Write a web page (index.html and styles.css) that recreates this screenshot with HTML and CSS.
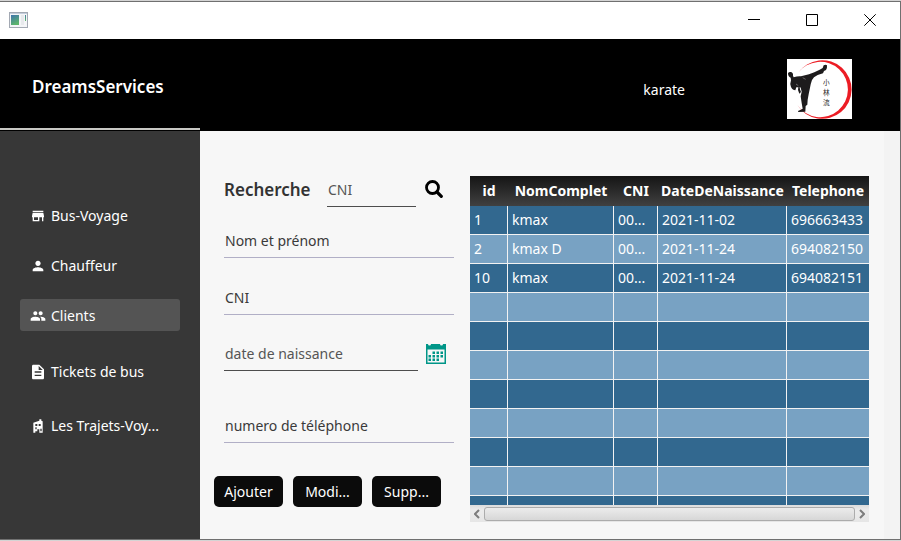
FILE: index.html
```html
<!DOCTYPE html>
<html lang="fr">
<head>
<meta charset="utf-8">
<title>DreamsServices</title>
<link rel="stylesheet" href="styles.css">
</head>
<body>
<div class="window">
  <div class="titlebar">
    <svg class="app-icon" width="20" height="17" viewBox="0 0 20 17" aria-hidden="true">
      <defs><linearGradient id="pane" x1="0" y1="0" x2="0.4" y2="1"><stop offset="0" stop-color="#3f74ad"/><stop offset="1" stop-color="#5cb56c"/></linearGradient></defs>
      <rect x="0.5" y="0.5" width="18" height="15" fill="#f4f5f7" stroke="#a3a9b3"/>
      <rect x="1" y="1" width="17" height="1" fill="#c3ccda"/>
      <rect x="2" y="3" width="8" height="10" fill="url(#pane)"/>
      <rect x="12" y="3" width="3" height="10" fill="#e7e9ec"/>
      <rect x="16" y="3" width="1" height="6" fill="url(#pane)"/>
    </svg>
    <div class="window-buttons">
      <button type="button" aria-label="Réduire"><svg width="12" height="12" viewBox="0 0 12 12"><path d="M0 5.5H12"/></svg></button>
      <button type="button" aria-label="Agrandir"><svg width="12" height="12" viewBox="0 0 12 12"><path d="M.5 .5H11.5V11.5H.5Z"/></svg></button>
      <button type="button" aria-label="Fermer"><svg width="12" height="12" viewBox="0 0 12 12"><path d="M.3 .3L11.7 11.7M11.7 .3L.3 11.7"/></svg></button>
    </div>
  </div>

  <header class="header">
    <div class="brand"><h1>DreamsServices</h1></div>
    <span class="user">karate</span>
    <svg class="logo" width="65" height="60" viewBox="0 0 195 180" role="img" aria-label="karate">
      <rect width="195" height="180" fill="#fff"/>
      <path fill="#ec1c24" d="M33 42A88 88 0 1 1 31 138A83 83 0 1 0 33 42Z"/>
      <path fill="#1d1b1c" d="M3 43Q5 38 12 39Q19 41 18 50L20 55Q32 51 42 52L54 49L66 46L82 40L98 32L107 27L110 19Q116 16 120 19Q121 27 117 33L111 36L108 43L92 48L81 55L75 63Q71 74 69 86L65 106L62 122L61 137L56 141L55 158L33 159Q32 155 40 153L47 149L44 132L41 112L44 98L41 86L38 83L39 91L42 99L37 104L33 93L34 85L28 85L25 94Q17 94 12 84Q8 74 12 64L11 56Q3 53 3 43Z"/>
      <path fill="none" stroke="#8a8788" stroke-width="2" d="M27 75L34 80M47 56L56 61"/>
      <g class="logo-text"><text x="118" y="79">小</text><text x="118" y="109">林</text><text x="118" y="139">流</text></g>
    </svg>
  </header>

  <div class="body">
    <nav class="sidebar">
      <div class="nav-group">
        <a class="nav-item" href="#"><svg viewBox="0 0 24 24"><path d="M20 4H4v2h16V4zm1 10v-2l-1-5H4l-1 5v2h1v6h10v-6h4v6h2v-6h1zm-9 4H6v-4h6v4z"/></svg>Bus-Voyage</a>
        <a class="nav-item" href="#"><svg viewBox="0 0 24 24"><path d="M12 12c2.200 0 4-1.800 4-4s-1.800-4-4-4-4 1.800-4 4 1.800 4 4 4zm0 2c-2.700 0-8 1.300-8 4v2h16v-2c0-2.700-5.300-4-8-4z"/></svg>Chauffeur</a>
        <a class="nav-item active" href="#" aria-current="page"><svg viewBox="0 0 24 24"><path d="M16 11c1.700 0 3-1.300 3-3s-1.300-3-3-3-3 1.300-3 3 1.300 3 3 3zm-8 0c1.700 0 3-1.300 3-3S9.700 5 8 5 5 6.300 5 8s1.300 3 3 3zm0 2c-2.300 0-7 1.200-7 3.500V19h14v-2.500c0-2.300-4.700-3.500-7-3.500zm8 0c-.3 0-.6 0-1 .05 1.200.8 2 2 2 3.450V19h6v-2.500c0-2.300-4.700-3.500-7-3.500z"/></svg>Clients</a>
      </div>
      <div class="nav-group late">
        <a class="nav-item" href="#"><svg viewBox="0 0 24 24"><path d="M14 1H5c-1.100 0-2 .9-2 2v18c0 1.100.9 2 2 2h14c1.100 0 2-.9 2-2V8l-7-7zm3 17H7v-2h10v2zm0-5H7v-2h10v2zm-4-4V3L19 9H13z"/></svg>Tickets de bus</a>
        <a class="nav-item" href="#"><svg viewBox="0 0 24 24"><path fill-rule="evenodd" d="M5 7L14 4V2h3v2l2 1v17h-5v-5h-3v3H8v2H5ZM8 9v3h3V9ZM13 9v3h3V9ZM8 14v3h2v-3ZM15.500 16v4h2v-4Z"/></svg>Les Trajets-Voy...</a>
      </div>
    </nav>

    <main class="content">
      <form class="form">
        <div class="search-row">
          <label class="search-label" for="search">Recherche</label>
          <input class="field dark" id="search" type="text" placeholder="CNI">
          <button class="icon-button" type="button" aria-label="Rechercher"><svg width="18" height="18" viewBox="0 0 18 18"><circle cx="7.500" cy="7.500" r="6" fill="none" stroke="#000" stroke-width="2.800"/><path d="M12 12L16.300 16.300" stroke="#000" stroke-width="3.200" stroke-linecap="round"/></svg></button>
        </div>
        <input class="field" type="text" placeholder="Nom et prénom" aria-label="Nom et prénom">
        <input class="field" type="text" placeholder="CNI" aria-label="CNI">
        <div class="date-row">
          <input class="field dark" type="text" placeholder="date de naissance" aria-label="date de naissance">
          <button class="icon-button" type="button" aria-label="Calendrier"><svg width="20" height="20" viewBox="0 0 20 20"><path fill="#009688" fill-rule="evenodd" d="M0 0H2Q2 1.500 3.500 1.500T5 0H14Q14 1.500 15.500 1.500T17 0H20V20H0ZM1.500 5.500V18.500H18.500V5.500Z"/><path fill="#009688" d="M6.500 7.500h2.500v2.500h-2.500zM10.500 7.500h2.500v2.500h-2.500zM14.500 7.500h2.500v2.500h-2.500zM2.500 11h2.500v2.500h-2.500zM6.500 11h2.500v2.500h-2.500zM10.500 11h2.500v2.500h-2.500zM14.500 11h2.500v2.500h-2.500zM2.500 14.500h2.500v2.500h-2.500zM6.500 14.500h2.500v2.500h-2.500zM10.500 14.500h2.500v2.500h-2.500z"/></svg></button>
        </div>
        <input class="field phone" type="text" placeholder="numero de téléphone" aria-label="numero de téléphone">
        <div class="actions">
          <button type="button">Ajouter</button>
          <button type="button">Modi...</button>
          <button type="button">Supp...</button>
        </div>
      </form>

      <section class="table-view">
        <div class="viewport">
          <table>
            <colgroup><col class="c-id"><col class="c-name"><col class="c-cni"><col class="c-date"><col></colgroup>
            <thead><tr><th>id</th><th>NomComplet</th><th>CNI</th><th>DateDeNaissance</th><th>Telephone</th></tr></thead>
            <tbody>
              <tr><td>1</td><td>kmax</td><td>00...</td><td>2021-11-02</td><td>696663433</td></tr>
              <tr><td>2</td><td>kmax D</td><td>00...</td><td>2021-11-24</td><td>694082150</td></tr>
              <tr><td>10</td><td>kmax</td><td>00...</td><td>2021-11-24</td><td>694082151</td></tr>
              <tr><td></td><td></td><td></td><td></td><td></td></tr>
              <tr><td></td><td></td><td></td><td></td><td></td></tr>
              <tr><td></td><td></td><td></td><td></td><td></td></tr>
              <tr><td></td><td></td><td></td><td></td><td></td></tr>
              <tr><td></td><td></td><td></td><td></td><td></td></tr>
              <tr><td></td><td></td><td></td><td></td><td></td></tr>
              <tr><td></td><td></td><td></td><td></td><td></td></tr>
              <tr><td></td><td></td><td></td><td></td><td></td></tr>
            </tbody>
          </table>
        </div>
        <div class="scrollbar">
          <button type="button" aria-label="Défiler à gauche"><svg width="6" height="10" viewBox="0 0 6 10"><path d="M5 1L1 5L5 9"/></svg></button>
          <div class="thumb"></div>
          <button type="button" aria-label="Défiler à droite"><svg width="6" height="10" viewBox="0 0 6 10"><path d="M1 1L5 5L1 9"/></svg></button>
        </div>
      </section>
    </main>
    <div class="edge"></div>
  </div>
</div>
</body>
</html>
```
FILE: styles.css
```css
* { box-sizing: border-box; }

body {
  margin: 0;
  height: 100vh;
  padding: 1px 0;
  background: #d4d4d4;
  font: 14px/20px "Noto Sans", "Open Sans", "Noto Sans CJK JP", sans-serif;
  color: #333;
}

button, input { font: inherit; color: inherit; }
button { border: 0; padding: 0; background: none; }
svg { display: block; }

.window {
  height: 100%;
  display: flex;
  flex-direction: column;
  border: 1px solid #707070;
  border-left: 0;
  background: #f7f7f7;
}

.titlebar {
  flex: none;
  height: 37px;
  display: flex;
  align-items: center;
  justify-content: space-between;
  padding-left: 9px;
  background: #fff;
}
.window-buttons { display: flex; align-self: flex-start; padding-right: 1px; }
.window-buttons button {
  width: 58px;
  height: 36px;
  display: grid;
  place-items: center;
}
.window-buttons path { fill: none; stroke: #000; stroke-width: 1; }

.header {
  flex: none;
  height: 92px;
  display: flex;
  align-items: center;
  background: #000;
  color: #fff;
}
.brand {
  width: 200px;
  height: 91px;
  align-self: flex-start;
  display: flex;
  align-items: center;
  padding: 6px 0 0 32px;
  border-bottom: 2px solid #c8c8c4;
}
.brand h1 { margin: 0; font-size: 17px; line-height: 24px; font-weight: 600; }
.user { margin-left: auto; padding-top: 10px; }
.logo { margin: 8px 48px 0 102px; }
.logo-text {
  font: 20px "Noto Sans CJK JP", sans-serif;
  text-anchor: middle;
  fill: #222;
}

.body { flex: 1; min-height: 0; display: flex; }

.sidebar {
  flex: none;
  width: 200px;
  padding: 68px 20px 0;
  background: #373737;
}
.nav-group { display: grid; gap: 18px; }
.nav-group.late { margin-top: 24px; gap: 22px; }
.nav-item {
  height: 32px;
  display: flex;
  align-items: center;
  gap: 5px;
  padding: 1px 0 0 10px;
  border-radius: 3px;
  color: #fff;
  text-decoration: none;
  white-space: nowrap;
}
.nav-item.active { background: #545454; }
.nav-item svg { width: 16px; height: 16px; fill: #fff; }

.content {
  flex: 1;
  min-width: 0;
  display: flex;
  gap: 16px;
  padding: 45px 15px 17px 14px;
}
.edge { flex: none; width: 16px; background: #f3f3f3; }

.form {
  flex: none;
  width: 240px;
  display: flex;
  flex-direction: column;
  padding-left: 10px;
}
.field {
  width: 100%;
  height: 34px;
  flex: none;
  padding: 0 1px;
  border: 0;
  border-bottom: 1px solid #b1afc6;
  background: none;
  outline: 0;
}
.field::placeholder { color: #3a3a3a; opacity: 1; }
.field.dark { border-color: #4d4d4d; }
.field.dark::placeholder { color: #555; }
.form > .field { margin-top: 23px; }
.search-row { display: flex; align-items: flex-start; margin-top: -3px; height: 34px; }
.search-row + .field { margin-top: 17px; }
.search-label { width: 103px; font-size: 17px; line-height: 34px; font-weight: 600; }
.search-row .field { width: 89px; flex: none; }
.search-row .icon-button { margin: 7px 0 0 9px; }
.date-row { display: flex; align-items: center; gap: 8px; margin-top: 22px; }
.date-row .field { width: 194px; }
.form > .phone { margin-top: 38px; }

.actions { display: flex; gap: 10px; margin: 33px 0 0 -10px; }
.actions button {
  width: 69px;
  height: 31px;
  border-radius: 5px;
  background: #0b0b0b;
  color: #fff;
}

.table-view {
  flex: 1;
  min-width: 0;
  display: flex;
  flex-direction: column;
}
.viewport { flex: 1; min-height: 0; overflow: hidden; }
table { width: 100%; table-layout: fixed; border-collapse: separate; border-spacing: 0; }
.c-id { width: 38px; }
.c-name { width: 106px; }
.c-cni { width: 44px; }
.c-date { width: 129px; }
thead { background: linear-gradient(#151515, #404040); }
th { height: 30px; padding: 0; color: #fff; font-weight: 700; }
td {
  height: 29px;
  padding: 0 4px;
  border: solid #f2f2f2;
  border-width: 0 1px 1px 0;
  color: #fff;
  white-space: nowrap;
}
td:last-child { border-right: 0; }
tbody tr { background: #32688f; }
tbody tr:nth-child(even) { background: #78a2c3; }

.scrollbar {
  flex: none;
  height: 17px;
  display: flex;
  align-items: center;
  background: linear-gradient(#dcdcdc, #ececec 30%, #e6e6e6);
}
.scrollbar button { width: 14px; height: 17px; display: grid; place-items: center; }
.scrollbar path { fill: none; stroke: #7d7d7d; stroke-width: 2; }
.thumb {
  flex: 1;
  height: 14px;
  border: 1px solid #acacac;
  border-radius: 3px;
  background: linear-gradient(#ececec, #d7d7d7);
}
```
